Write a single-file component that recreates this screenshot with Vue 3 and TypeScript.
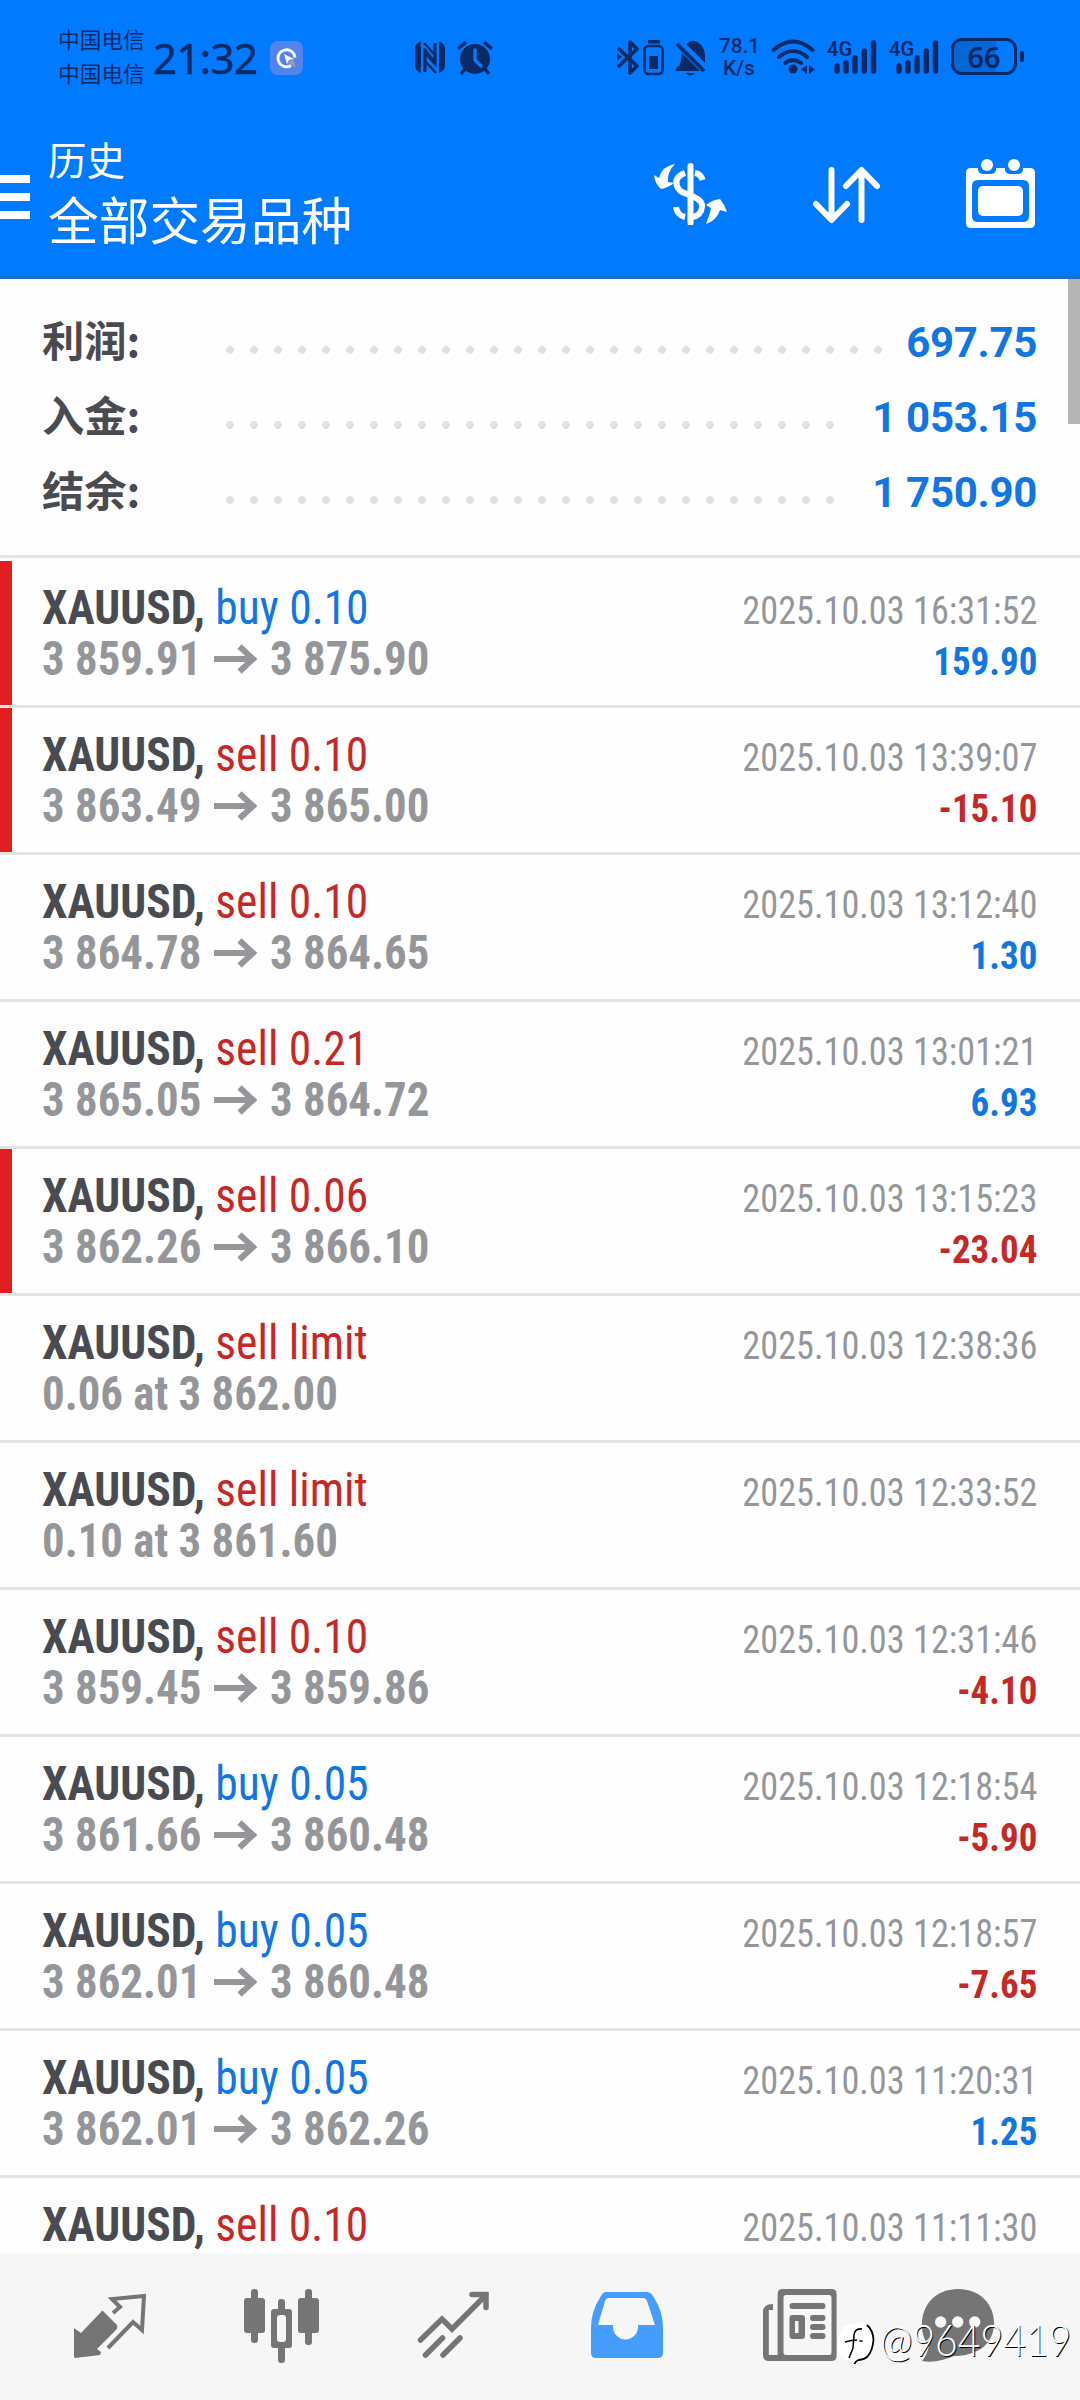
<script setup lang="ts">
interface Deal {
  id: number
  type: 'buy' | 'sell'
  label: string
  open?: string
  close?: string
  note?: string
  time: string
  profit?: string
  stopped?: boolean
}

const totals = [
  { label: '利润:', value: '697.75', dots: 28 },
  { label: '入金:', value: '1 053.15', dots: 26 },
  { label: '结余:', value: '1 750.90', dots: 26 },
]

const deals: Deal[] = [
  { id: 1, type: 'buy', label: 'buy 0.10', open: '3 859.91', close: '3 875.90', time: '2025.10.03 16:31:52', profit: '159.90', stopped: true },
  { id: 2, type: 'sell', label: 'sell 0.10', open: '3 863.49', close: '3 865.00', time: '2025.10.03 13:39:07', profit: '-15.10', stopped: true },
  { id: 3, type: 'sell', label: 'sell 0.10', open: '3 864.78', close: '3 864.65', time: '2025.10.03 13:12:40', profit: '1.30' },
  { id: 4, type: 'sell', label: 'sell 0.21', open: '3 865.05', close: '3 864.72', time: '2025.10.03 13:01:21', profit: '6.93' },
  { id: 5, type: 'sell', label: 'sell 0.06', open: '3 862.26', close: '3 866.10', time: '2025.10.03 13:15:23', profit: '-23.04', stopped: true },
  { id: 6, type: 'sell', label: 'sell limit', note: '0.06 at 3 862.00', time: '2025.10.03 12:38:36' },
  { id: 7, type: 'sell', label: 'sell limit', note: '0.10 at 3 861.60', time: '2025.10.03 12:33:52' },
  { id: 8, type: 'sell', label: 'sell 0.10', open: '3 859.45', close: '3 859.86', time: '2025.10.03 12:31:46', profit: '-4.10' },
  { id: 9, type: 'buy', label: 'buy 0.05', open: '3 861.66', close: '3 860.48', time: '2025.10.03 12:18:54', profit: '-5.90' },
  { id: 10, type: 'buy', label: 'buy 0.05', open: '3 862.01', close: '3 860.48', time: '2025.10.03 12:18:57', profit: '-7.65' },
  { id: 11, type: 'buy', label: 'buy 0.05', open: '3 862.01', close: '3 862.26', time: '2025.10.03 11:20:31', profit: '1.25' },
  { id: 12, type: 'sell', label: 'sell 0.10', time: '2025.10.03 11:11:30' },
]
</script>

<template>
  <div class="screen">
    <header class="header">
      <div class="status">
        <div class="carriers"><span>中国电信</span><span>中国电信</span></div>
        <span class="clock">21:32</span>
        <svg class="badge" width="34" height="34" viewBox="0 0 34 34">
          <rect width="33" height="34" rx="8" fill="#5384ee" />
          <path d="M21 24.500a8.500 8.500 0 1 1 4-8" fill="none" stroke="#fff" stroke-width="2.800" />
          <path d="M14 13l10 5-5 1-2 4z" fill="#fff" />
          <path d="M18 21l5-2 3 8z" fill="#a89a9a" />
        </svg>
        <svg class="nfc" width="80" height="36" viewBox="0 0 80 36">
          <g fill="none" stroke="#0a2a66">
            <path d="M7 1.500Q1 3 1 9v16q0 6 6 8L6 18zM25 1.500Q31 3 31 9v16q0 6-6 8L26 18z" fill="#0a2a66" stroke="none" />
            <path d="M11 32V12l11 13M21 3v20L10 9" stroke-width="3.200" />
            <path d="M10 3l12 13M11 21l11 12" stroke-width="2.500" />
            <path d="M4 7v20M28 7v20" stroke-width="6" />
          </g>
          <g fill="#0a2a66">
            <circle cx="61" cy="19" r="15" />
            <path d="M44 9l8-7M70 2l8 7M51 29l-4 5M71 29l4 5" stroke="#0a2a66" stroke-width="3.500" />
          </g>
          <path d="M61 10v10l6 6" fill="none" stroke="#007aff" stroke-width="3.500" stroke-linecap="round" />
        </svg>
        <svg class="bt" width="90" height="38" viewBox="0 0 90 38">
          <g fill="none" stroke="#0a2a66" stroke-width="3.600">
            <path d="M1 9l19 18-7 7V3l7 7L1 28" stroke-linejoin="round" />
            <rect x="27.500" y="7" width="18" height="28" rx="4" stroke-width="2.600" />
          </g>
          <g fill="#0a2a66">
            <path d="M0 14l5 4-5 4zM31 1h12v3.500H31zM32 17h9v13h-9z" />
            <path d="M65 14l18 18H58.500q0-3 4.500-6zM71 4q3-3 7-2 9 3 10 14v8L69 5zM69 34h9q-4 5-9 0z" />
            <path d="M60 5l27 27" stroke="#0a2a66" stroke-width="3.800" />
          </g>
        </svg>
        <div class="speed"><span>78.1</span><span>K/s</span></div>
        <svg class="wifi" width="44" height="36" viewBox="0 0 44 36">
          <g fill="none" stroke="#0a2a66" stroke-width="4" stroke-linecap="round">
            <path d="M2.500 11q19.500-17 39 0M8 18q14-12 28 0M14 24q8-6 16 0" />
          </g>
          <g fill="#0a2a66"><circle cx="22" cy="30" r="4.500" /><path d="M36 26v9l-6-4.500zM38 26v9l6-4.500z" /></g>
        </svg>
        <div v-for="n in 2" :key="n" class="signal">
          <span>4G</span>
          <svg width="43" height="34" viewBox="0 0 43 34">
            <path d="M3 26v5M12 23v8M21 18v13M30.300 11v20M39.500 3v28" stroke="#0a2a66" stroke-width="5.400" stroke-linecap="round" />
          </svg>
        </div>
        <div class="battery"><span>66</span></div>
        <i class="tip"></i>
      </div>
      <div class="toolbar">
        <div class="menu"><i></i><i></i><i></i></div>
        <div class="titles"><small>历史</small><strong>全部交易品种</strong></div>
        <svg class="tool-dollar" width="74" height="62" viewBox="0 0 74 62">
          <path d="M36.500 3v57" stroke="#fff" stroke-width="6" stroke-linecap="round" />
          <path d="M31 10q-11 4-8 13 2 6 10 8l7 3q9 4 8 10-1 9-10 10M41 10q6 1 7.500 7M31 54q-8-2-9-10" fill="none" stroke="#fff" stroke-width="6" stroke-linecap="butt" />
          <path d="M21 1Q8 3 5 15L0 12q1 9 7 14 8-2 13-6l-6-1Q13 9 21 1zM52 61q4-10 5-16l-5-3q6-5 14-6 5 6 7 13l-7-2q-3 10-14 14z" fill="#fff" />
        </svg>
        <svg class="tool-sort" width="68" height="58" viewBox="0 0 68 58">
          <path d="M18.500 4v49M3 38l15.500 16L34 38M48.500 54V5M33 20L48.500 4 64 20" fill="none" stroke="#fff" stroke-width="6" stroke-linecap="round" stroke-linejoin="round" />
        </svg>
        <svg class="tool-cal" width="70" height="70" viewBox="0 0 70 70">
          <path fill="#fff" fill-rule="evenodd" d="M5 10h7v2q1 4 5 4h8q4 0 5-4v-2h9v2q1 4 5 4h8q4 0 5-4v-2h7q5 0 5 5v50q0 5-5 5H5q-5 0-5-5V15q0-5 5-5zM12 22q-6 0-6 6v30q0 6 6 6h45q6 0 6-6V28q0-6-6-6z" />
          <rect x="12" y="28" width="45" height="30" rx="5" fill="#fff" />
          <circle cx="21" cy="7" r="6" fill="#fff" /><circle cx="48" cy="7" r="6" fill="#fff" />
        </svg>
      </div>
    </header>

    <main class="content">
      <i class="scrollbar"></i>
      <section class="totals">
        <div v-for="t in totals" :key="t.label" class="total">
          <span class="total-label">{{ t.label }}</span>
          <i class="dots" :style="{ width: t.dots * 24 + 'px' }"></i>
          <b>{{ t.value }}</b>
        </div>
      </section>
      <section class="deals">
        <article v-for="d in deals" :key="d.id" class="deal" :class="{ stopped: d.stopped }">
          <div class="left">
            <div class="name"><b>XAUUSD,</b> <span :class="d.type">{{ d.label }}</span></div>
            <div v-if="d.open" class="prices">
              <span class="price open">{{ d.open }}</span>
              <svg width="43" height="30" viewBox="0 0 43 30"><path d="M0 15h38M25.500 2.500L39 15 25.500 27.500" fill="none" stroke="#959699" stroke-width="6" /></svg>
              <span class="price">{{ d.close }}</span>
            </div>
            <div v-else-if="d.note" class="prices"><span class="price">{{ d.note }}</span></div>
          </div>
          <div class="right">
            <div class="time">{{ d.time }}</div>
            <div v-if="d.profit" class="profit" :class="d.profit.startsWith('-') ? 'sell' : 'buy'">{{ d.profit }}</div>
          </div>
        </article>
      </section>
    </main>

    <nav class="tabs">
      <svg width="180" height="147" viewBox="0 2 180 147">
        <path d="M103 60l14 14q1 3-1 5l-19 19 4 3-1 3-25 3q-1 0-1-2V77l7 5 20-21q1-2 2-1z" fill="#757575" />
        <path d="M113 62l7-6-8-8 32-3-2 34-9-8-25 26" fill="none" stroke="#757575" stroke-width="4" />
      </svg>
      <svg width="180" height="147" viewBox="0 2 180 147">
        <g fill="#757575">
          <rect x="64" y="47" width="21" height="35" rx="3" /><rect x="71" y="38" width="7" height="54" rx="3" />
          <rect x="118" y="47" width="21" height="35" rx="3" /><rect x="125" y="38" width="7" height="56" rx="3" />
          <rect x="98" y="48" width="7" height="64" rx="3" /><rect x="91" y="58" width="21" height="39" rx="3" />
        </g>
        <rect x="97" y="64" width="9" height="27" rx="3" fill="#f7f7f7" />
      </svg>
      <svg width="180" height="147" viewBox="0 2 180 147">
        <path d="M60.500 89L82 68l10 10 34-34M112 43.500h14v13M65.500 104l17-17M83 104l17-17" fill="none" stroke="#757575" stroke-width="5.500" stroke-linecap="round" />
      </svg>
      <svg width="180" height="147" viewBox="0 2 180 147">
        <path fill="#459dfe" fill-rule="evenodd" d="M66 41h40q5 0 7 4 10 15 10 32v25q0 5-5 5H56q-5 0-5-5V77q0-17 10-32 2-4 5-4zM69 47q-3 0-4 3L58 74h15v2a12.500 12.500 0 0 0 25 0v-2h17l-8-24q-1-3-4-3z" />
      </svg>
      <svg width="180" height="147" viewBox="0 0 180 147">
        <path fill="#757575" fill-rule="evenodd" d="M53 51v6h-4.200v45h8.800V41q0-5 5-5h49q5 0 5 5v62q0 5-5 5H49q-6 0-6-6V59q0-8 10-8zM66 42q-2.500 0-2.500 2.500v55q0 2.500 2.500 2.500h43q2.500 0 2.500-2.500v-55q0-2.500-2.500-2.500z" />
        <path fill="#757575" fill-rule="evenodd" d="M72.500 62H82q3 0 3 3v18q0 3-3 3h-9.500q-3 0-3-3V65q0-3 3-3zM75 68v12h3.500V68z" />
        <path d="M72.500 53h30M93 65h9.500M93 74h9.500M93 83h9.500" stroke="#757575" stroke-width="6" stroke-linecap="round" />
      </svg>
      <svg width="180" height="147" viewBox="0 0 180 147">
        <path d="M22 108q5-6 7-15C16 78 19 37 58 36c22 0 36 15 36 34 0 23-19 33-40 33-10 4-20 7-32 5z" fill="#757575" />
        <g fill="#f7f7f7"><circle cx="40.700" cy="69" r="5.700" /><circle cx="57.700" cy="69" r="5.700" /><circle cx="74.700" cy="69" r="5.700" /></g>
      </svg>
      <div class="watermark">
        <svg width="42" height="46" viewBox="0 0 42 46">
          <path d="M10 3q9-4 19-1 9 7 8 20-2 11-10 15l-9 3Q5 40 1 30-1 9 10 3z" fill="#fff" />
          <path d="M30 3q6 5 6.500 15-1 11-6 16.500-3 3-9 3.500-3 1-4 4" fill="none" stroke="#000" stroke-width="1.800" />
          <path d="M25 7q-7-1-8 6l-1 13-4 10M8 20q6-2 12-2M22.500 19h3" fill="none" stroke="#000" stroke-width="1.500" />
        </svg>
        <span>@9649419</span>
      </div>
    </nav>
  </div>
</template>

<style>
body { background: #fff; }
</style>

<style scoped>
.screen { width: 1080px; height: 2400px; overflow: hidden; display: flex; flex-direction: column; background: #fefefe; font-family: "Roboto Condensed", Roboto, "Noto Sans CJK SC", sans-serif; }
.header { height: 279px; flex: none; box-sizing: border-box; background: #007aff; border-bottom: 3px solid #1a71c4; }
.status { height: 116px; display: flex; align-items: flex-start; color: #0a2a66; }
.status > * { flex: none; }
.carriers { margin: 22px 0 0 58px; width: 95px; display: flex; flex-direction: column; font: 21.700px/34px "Noto Sans CJK SC", sans-serif; white-space: nowrap; }
.clock { margin-top: 33px; width: 117px; font: 400 42px/50px "Noto Sans", sans-serif; letter-spacing: -.6px; -webkit-text-stroke: .5px #0a2a66; white-space: nowrap; }
.badge { margin-top: 41px; }
.nfc { margin: 40px 0 0 110px; }
.bt { margin: 39px 0 0 123px; }
.speed { margin: 35px 0 0 12px; width: 49px; display: flex; flex-direction: column; font: 500 21px/22px Roboto, sans-serif; letter-spacing: -.2px; }
.speed span:last-child { padding-left: 4px; }
.wifi { margin: 39px 0 0 3px; }
.signal { position: relative; width: 62px; margin-top: 40px; }
.wifi + .signal { margin-left: 12px; }
.signal svg { display: block; margin-left: 7px; }
.signal span { position: absolute; left: 0; top: -3px; font: 600 20px/24px Roboto, sans-serif; }
.battery { box-sizing: border-box; width: 66px; height: 37px; border: 3px solid #0a2a66; border-radius: 11px; margin-top: 38px; text-align: center; font: 600 29px/31px "Noto Sans", sans-serif; background: linear-gradient(90deg, #0566d6 70%, transparent 70%); }
.tip { width: 4px; height: 11px; border-radius: 2px; background: #0a2a66; margin: 51px 0 0 3px; }
.toolbar { height: 160px; display: flex; align-items: flex-start; color: #fff; }
.toolbar > * { flex: none; }
.menu { width: 30px; margin-top: 59px; display: flex; flex-direction: column; gap: 10px; }
.menu i { height: 8px; background: #fff; }
.titles { margin: 17px 0 0 18px; width: 606px; display: flex; flex-direction: column; font-family: "Noto Sans CJK SC", sans-serif; }
.titles small { font-size: 38.500px; line-height: 50px; }
.titles strong { font-weight: 400; font-size: 50.700px; line-height: 71px; }
.tool-dollar { margin-top: 47px; }
.tool-sort { margin: 50px 0 0 85px; }
.tool-cal { margin: 42px 0 0 85px; }
.content { flex: 1; overflow: hidden; position: relative; }
.scrollbar { position: absolute; right: 0; top: 0; width: 12px; height: 145px; background: #b5b5b5; }
.totals { height: 276px; padding-top: 26px; box-sizing: border-box; }
.total { height: 75px; display: flex; align-items: center; padding: 0 43px 0 42px; }
.total-label { width: 176px; margin-bottom: 7px; font: 700 42.300px/68px "Noto Sans CJK SC", sans-serif; color: #4a4b50; }
.dots { height: 8px; margin-top: 14px; background: radial-gradient(circle, #e0e0e0 3.500px, transparent 4.200px) 0 0 / 24px 8px; }
.total b { margin-left: auto; font: 700 42px/75px Roboto, sans-serif; letter-spacing: -.3px; color: #1176e4; }
.deals { border-top: 3px solid #e4e4e4; padding-top: 3px; }
.deal { height: 144px; border-bottom: 3px solid #e4e4e4; display: flex; justify-content: space-between; padding: 0 43px 0 42px; }
.deal.stopped { background: linear-gradient(#e11f1f, #e11f1f) 0 0 / 12px 100% no-repeat; }
.name, .prices { font-size: 48px; line-height: 51px; height: 51px; white-space: nowrap; }
.name { margin-top: 21px; transform: scaleX(.948); transform-origin: left; }
.name b { color: #4a4b50; }
.prices { font-weight: 700; color: #959699; display: flex; align-items: center; }
.price { transform: scaleX(.934); transform-origin: left; }
.open { width: 172px; flex: none; }
.prices svg { flex: none; margin-right: 13px; }
.right { text-align: right; }
.time { margin-top: 24px; height: 51px; font-size: 39.500px; line-height: 51px; color: #959699; transform: scaleX(.918); transform-origin: right; }
.profit { font-size: 39.500px; font-weight: 700; line-height: 51px; transform: scaleX(.935); transform-origin: right; }
.buy { color: #1176e4; }
.sell { color: #c62828; }
.tabs { position: relative; flex: none; height: 147px; background: #f6f6f6; display: flex; }
.watermark { position: absolute; left: 837px; top: 65px; display: flex; align-items: flex-start; color: #fff; }
.watermark svg { margin-top: 4px; }
.watermark span { margin: -3px 0 0 1px; font: 300 43px/50px Lato, sans-serif; text-shadow: 1px 1px 0 #000; transform: scaleX(.91); transform-origin: left; }
</style>
